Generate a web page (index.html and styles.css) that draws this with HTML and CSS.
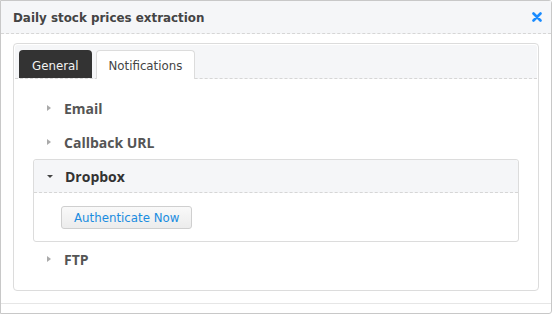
FILE: index.html
```html
<!DOCTYPE html>
<html lang="en">
<head>
    <meta charset="UTF-8">
    <meta name="viewport" content="width=device-width, initial-scale=1.0">
    <title>Daily stock prices extraction</title>
    <link rel="stylesheet" href="styles.css">
</head>
<body>
    <div class="dialog">
        <div class="dialog-header">
            <div class="dialog-title">Daily stock prices extraction</div>
            <button class="close-btn" aria-label="Close">
                <svg width="10" height="10" viewBox="0 0 10 10">
                    <path d="M1.5 1.5 L8.5 8.5 M8.5 1.5 L1.5 8.5" stroke="#1a8cff" stroke-width="2.6" stroke-linecap="round"/>
                </svg>
            </button>
        </div>
        <div class="dialog-body">
            <div class="panel">
                <div class="tab-strip">
                    <div class="tab tab-dark">General</div>
                    <div class="tab tab-active">Notifications</div>
                </div>
                <div class="panel-content">
                    <div class="section">
                        <div class="section-head"><span class="arrow-right"></span><span class="section-label">Email</span></div>
                    </div>
                    <div class="section">
                        <div class="section-head"><span class="arrow-right"></span><span class="section-label">Callback URL</span></div>
                    </div>
                    <div class="section open">
                        <div class="section-head"><span class="arrow-down"></span><span class="section-label">Dropbox</span></div>
                        <div class="section-body">
                            <button class="auth-btn">Authenticate Now</button>
                        </div>
                    </div>
                    <div class="section">
                        <div class="section-head"><span class="arrow-right"></span><span class="section-label">FTP</span></div>
                    </div>
                </div>
            </div>
        </div>
        <div class="dialog-footer"></div>
    </div>
</body>
</html>
```

FILE: styles.css
```css
body {
    margin: 0;
    font-family: 'DejaVu Sans', sans-serif;
    background: #fff;
}

.dialog {
    width: 550px;
    height: 312px;
    border: 1px solid #c8c8c8;
    border-radius: 0 3px 3px 0;
    display: flex;
    flex-direction: column;
}

.dialog-header {
    height: 32px;
    background: #f5f6f8;
    border-bottom: 1px dashed #d6d6d6;
    display: flex;
    align-items: center;
    justify-content: space-between;
    padding: 0 9px 0 12px;
}
.dialog-title {
    font-size: 11.9px;
    font-weight: bold;
    color: #444;
    margin-top: 2px;
}
.close-btn {
    background: none;
    border: none;
    padding: 0;
    width: 10px;
    height: 10px;
    display: flex;
    cursor: pointer;
}

.dialog-body {
    flex: 1;
    padding: 9px 12px 12px;
}

.panel {
    height: 100%;
    box-sizing: border-box;
    border: 1px solid #dcdcdc;
    border-radius: 4px;
    padding: 1px;
}

.tab-strip {
    background: #f5f6f8;
    border-bottom: 1px dashed #d6d6d6;
    border-radius: 3px 3px 0 0;
    display: flex;
    gap: 4px;
    padding: 5px 0 0 4px;
    height: 28px;
    margin-bottom: -1px;
}
.tab {
    height: 28px;
    line-height: 32px;
    padding: 0 13px;
    font-size: 11.8px;
    border-radius: 4px 4px 0 0;
    box-sizing: border-box;
}
.tab-dark {
    background: #333;
    color: #f2f2f2;
    padding: 0 13px;
}
.tab-active {
    background: #fff;
    color: #444;
    border: 1px solid #dcdcdc;
    border-bottom: none;
    position: relative;
    height: 29px;
    line-height: 31px;
    padding: 0 12px;
}

.panel-content {
    padding: 13px 18px 0;
}

.section {
    border: 1px solid transparent;
    border-radius: 3px;
}
.section.open {
    border-color: #dcdcdc;
}
.section-head {
    height: 32px;
    display: flex;
    align-items: center;
    padding-left: 13px;
}
.section.open .section-head {
    background: #f5f6f8;
    border-bottom: 1px dashed #d6d6d6;
    border-radius: 3px 3px 0 0;
}
.section-label {
    font-family: 'Open Sans', sans-serif;
    font-size: 14px;
    font-weight: bold;
    color: #555;
}
.section.open .section-label {
    color: #333;
}
.arrow-right {
    width: 0;
    height: 0;
    border-top: 3px solid transparent;
    border-bottom: 3px solid transparent;
    border-left: 4px solid #aaa;
    margin-right: 13px;
}
.arrow-down {
    width: 0;
    height: 0;
    border-left: 3px solid transparent;
    border-right: 3px solid transparent;
    border-top: 3px solid #444;
    margin-right: 12px;
}

.section-body {
    padding: 13px 27px 12px;
}
.auth-btn {
    font-family: 'DejaVu Sans', sans-serif;
    font-size: 11.8px;
    color: #1a8ce0;
    height: 23px;
    padding: 1px 12px 0;
    border: 1px solid #cfcfcf;
    border-radius: 3px;
    background: linear-gradient(#f9f9f9, #ececec);
    cursor: pointer;
}

.dialog-footer {
    height: 9px;
    border-top: 1px solid #e6e6e6;
}
```
